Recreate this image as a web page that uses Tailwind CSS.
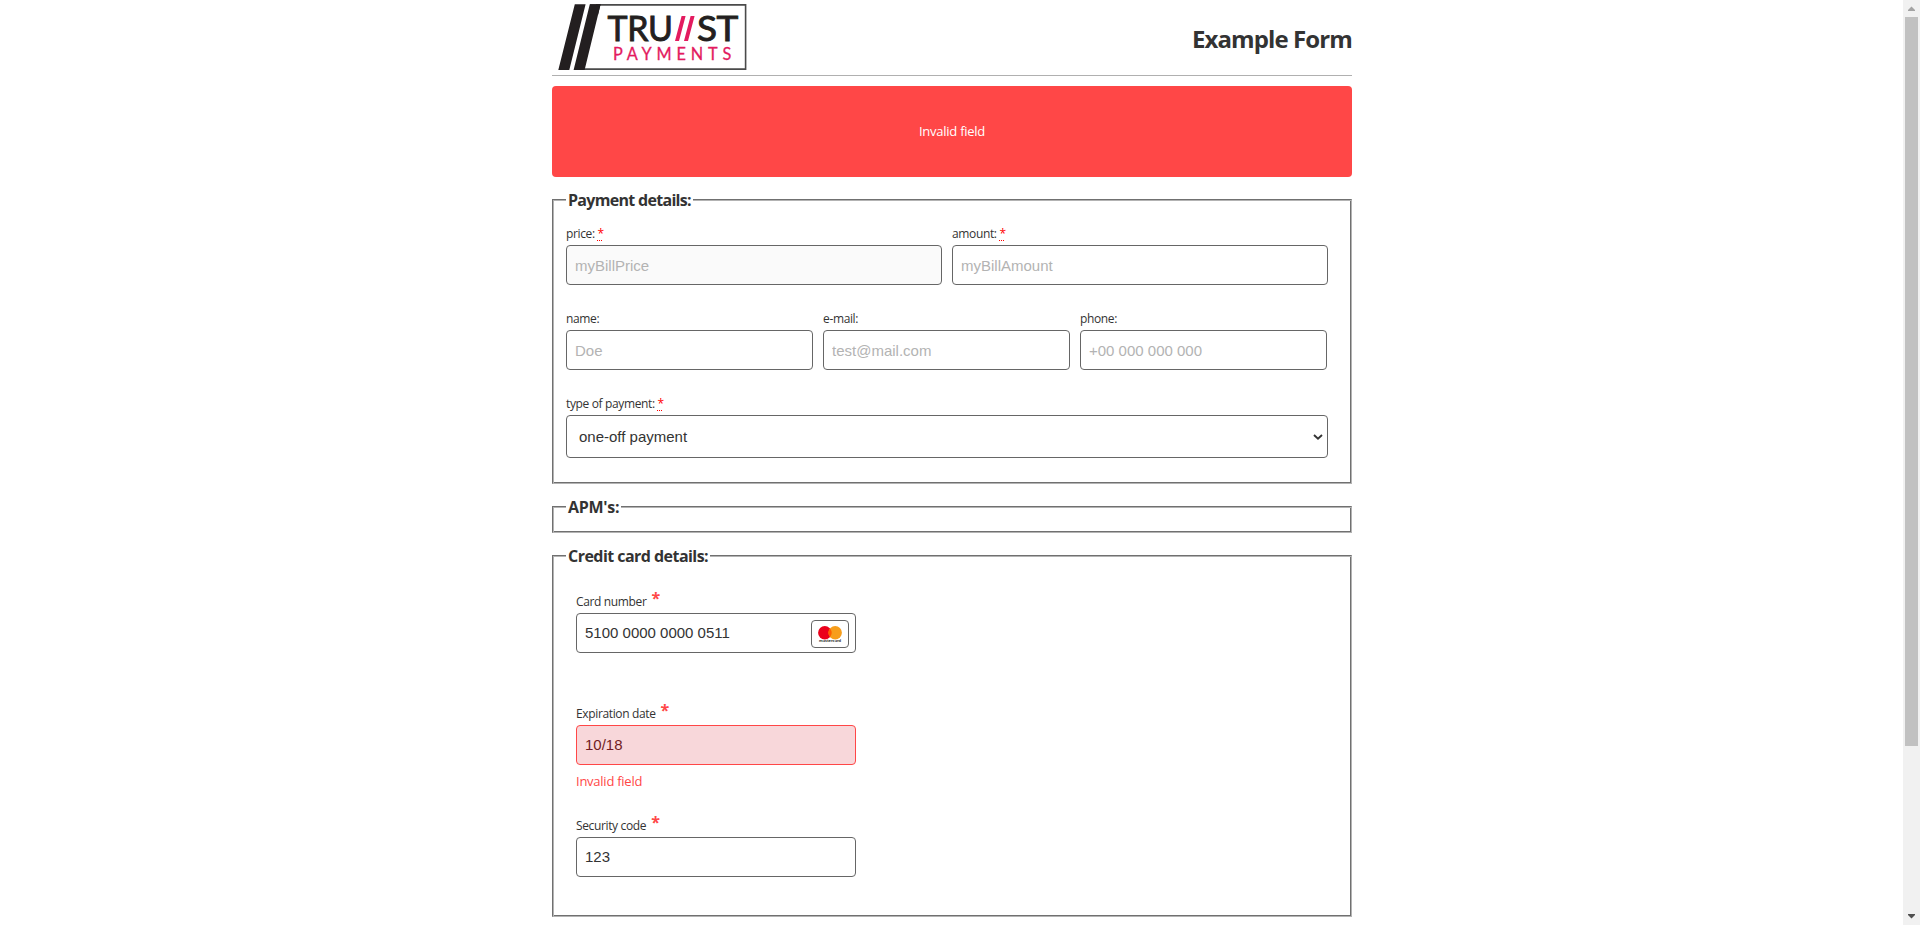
<!DOCTYPE html>
<html lang="en">
<head>
<meta charset="utf-8">
<title>Example Form</title>
<script src="https://cdn.jsdelivr.net/npm/@tailwindcss/browser@4"></script>
</head>
<body class="flex h-[925px] overflow-hidden bg-white font-['Open_Sans',sans-serif] text-[12px] leading-4 tracking-[-0.36px] text-[#333]">
<main class="flex-1">
  <div class="mx-auto box-content w-[800px] pl-px">
    <header class="flex h-[76px] w-[800px] justify-between border-b border-[#b0b0b0]">
      <svg class="ml-[5px] h-[72px] w-[192px]" viewBox="557 0 192 72">
        <path d="M596 4.9H745.6V69.1H583" fill="none" stroke="#4a4a4a" stroke-width="1.6"/>
        <path d="M574.8 4.2H585.6L569.3 70H558.3ZM589.8 4.2H600.6L584.6 70H573.6Z" fill="#231f20"/>
        <g font-family="Lato, sans-serif">
          <text x="607.5" y="40.8" font-size="34" textLength="65" lengthAdjust="spacingAndGlyphs" fill="#231f20" stroke="#231f20" stroke-width=".9">TRU</text>
          <text x="697" y="40.8" font-size="34" textLength="41" lengthAdjust="spacingAndGlyphs" fill="#231f20" stroke="#231f20" stroke-width=".9">ST</text>
          <text x="613" y="60" font-size="16.3" textLength="118" fill="#e31b5f" stroke="#e31b5f" stroke-width=".3">PAYMENTS</text>
        </g>
        <path d="M681.6 16H685.6L679 41H675ZM690.6 16H694.6L688 41H684Z" fill="#e31b5f"/>
        <path d="M590 4.2H600.6L598 15V5.7H590Z" fill="#231f20"/>
      </svg>
      <h1 class="mt-[23px] text-[24px] leading-8 font-bold tracking-[-0.9px]">Example Form</h1>
    </header>

    <div class="mt-[10px] flex h-[91px] w-[800px] items-center justify-center rounded-[4px] bg-[#ff4747] pb-[2px] text-[13px] tracking-[-0.25px] text-white">Invalid field</div>

    <section class="relative mt-[22px] h-[285px] w-[800px] border border-t-[#707070] border-r-[#b3b3b3] border-b-[#b3b3b3] border-l-[#707070] pt-[27px] pl-[13px] shadow-[inset_1px_1px_#b3b3b3,inset_-1px_-1px_#707070]">
      <h2 class="absolute top-[-11px] left-[13px] bg-white px-[2px] text-[16px] leading-[22px] font-bold tracking-[-0.7px]">Payment details:</h2>
      <div class="flex gap-[10px]">
        <div class="w-[376px]">
          <label class="block h-[18px] leading-[14px]" for="price">price: <span class="text-[#f00] underline decoration-dotted decoration-1 underline-offset-2">*</span></label>
          <input id="price" placeholder="myBillPrice" class="block h-10 w-full rounded-[4px] border border-[#666] bg-[#fafafa] px-2 font-['Liberation_Sans',sans-serif] text-[15px] tracking-normal placeholder:text-[#b3b3b3]">
        </div>
        <div class="w-[376px]">
          <label class="block h-[18px] leading-[14px]" for="amount">amount: <span class="text-[#f00] underline decoration-dotted decoration-1 underline-offset-2">*</span></label>
          <input id="amount" placeholder="myBillAmount" class="block h-10 w-full rounded-[4px] border border-[#666] px-2 font-['Liberation_Sans',sans-serif] text-[15px] tracking-normal placeholder:text-[#b3b3b3]">
        </div>
      </div>
      <div class="mt-[27px] flex gap-[10px]">
        <div class="w-[247px]">
          <label class="block h-[18px] leading-[14px]" for="name">name:</label>
          <input id="name" placeholder="Doe" class="block h-10 w-full rounded-[4px] border border-[#666] px-2 font-['Liberation_Sans',sans-serif] text-[15px] tracking-normal placeholder:text-[#b3b3b3]">
        </div>
        <div class="w-[247px]">
          <label class="block h-[18px] leading-[14px]" for="email">e-mail:</label>
          <input id="email" placeholder="test@mail.com" class="block h-10 w-full rounded-[4px] border border-[#666] px-2 font-['Liberation_Sans',sans-serif] text-[15px] tracking-normal placeholder:text-[#b3b3b3]">
        </div>
        <div class="w-[247px]">
          <label class="block h-[18px] leading-[14px]" for="phone">phone:</label>
          <input id="phone" placeholder="+00 000 000 000" class="block h-10 w-full rounded-[4px] border border-[#666] px-2 font-['Liberation_Sans',sans-serif] text-[15px] tracking-normal placeholder:text-[#b3b3b3]">
        </div>
      </div>
      <div class="mt-[27px] w-[762px]">
        <span class="block h-[18px] leading-[14px]">type of payment: <span class="text-[#f00] underline decoration-dotted decoration-1 underline-offset-2">*</span></span>
        <div class="flex h-[43px] items-center justify-between rounded-[4px] border border-[#666] pr-1 pl-3 font-['Liberation_Sans',sans-serif] text-[15px] tracking-normal">
          <span>one-off payment</span>
          <svg class="h-[6px] w-[10px]" viewBox="0 0 10 6"><path d="M1 1L5 4.7L9 1" fill="none" stroke="#333" stroke-width="1.9"/></svg>
        </div>
      </div>
    </section>

    <section class="relative mt-[22px] h-[27px] w-[800px] border border-t-[#707070] border-r-[#b3b3b3] border-b-[#b3b3b3] border-l-[#707070] shadow-[inset_1px_1px_#b3b3b3,inset_-1px_-1px_#707070]">
      <h2 class="absolute top-[-11px] left-[13px] bg-white px-[2px] text-[16px] leading-[22px] font-bold tracking-[-0.3px]">APM's:</h2>
    </section>

    <section class="relative mt-[22px] h-[362px] w-[800px] border border-t-[#707070] border-r-[#b3b3b3] border-b-[#b3b3b3] border-l-[#707070] pt-[38px] pl-[23px] shadow-[inset_1px_1px_#b3b3b3,inset_-1px_-1px_#707070]">
      <h2 class="absolute top-[-11px] left-[13px] bg-white px-[2px] text-[16px] leading-[22px] font-bold tracking-[-0.54px]">Credit card details:</h2>
      <div class="h-[112px] w-[280px]">
        <div class="flex h-[19px] gap-[5px]"><span>Card number</span><span class="-mt-[4px] text-[16px] font-bold text-[#ff4747]">*</span></div>
        <div class="flex h-10 items-center justify-between rounded-[4px] border border-[#666] pr-[6px] pl-2 font-['Liberation_Sans',sans-serif] text-[15px] tracking-normal">
          <span>5100 0000 0000 0511</span>
          <span class="mt-px flex h-[28px] w-[38px] items-center justify-center rounded-[4px] border border-[#666]">
            <svg class="h-[26px] w-[36px]" viewBox="812 621 36 26">
              <circle cx="824.8" cy="632.8" r="6.7" fill="#eb001b"/><circle cx="835.2" cy="632.8" r="6.7" fill="#f79e1b"/>
              <path d="M830 628.6a6.7 6.7 0 0 1 0 8.4a6.7 6.7 0 0 1 0-8.4Z" fill="#ff5f00"/>
              <text x="819" y="641.8" font-family="Lato, sans-serif" font-size="4" font-weight="700" textLength="22" lengthAdjust="spacingAndGlyphs" fill="#231f20">mastercard</text>
            </svg>
          </span>
        </div>
      </div>
      <div class="h-[112px] w-[280px]">
        <div class="flex h-[19px] gap-[5px]"><span>Expiration date</span><span class="-mt-[4px] text-[16px] font-bold text-[#ff4747]">*</span></div>
        <div class="flex h-10 items-center rounded-[4px] border border-[#ff4747] bg-[#f8d7da] pl-2 font-['Liberation_Sans',sans-serif] text-[15px] tracking-normal text-[#721c24]">10/18</div>
        <div class="mt-[8px] text-[13px] tracking-[-0.25px] text-[#ff4747]">Invalid field</div>
      </div>
      <div class="w-[280px]">
        <div class="flex h-[19px] gap-[5px]"><span>Security code</span><span class="-mt-[4px] text-[16px] font-bold text-[#ff4747]">*</span></div>
        <div class="flex h-10 items-center rounded-[4px] border border-[#666] pl-2 font-['Liberation_Sans',sans-serif] text-[15px] tracking-normal">123</div>
      </div>
    </section>
  </div>
</main>
<aside class="flex h-full w-[17px] flex-col items-center bg-[#f1f1f1]">
  <svg class="h-[17px] w-[17px]" viewBox="0 0 17 17"><path d="M5 11V10L8.5 6.5L12 10V11Z" fill="#a3a3a3"/></svg>
  <div class="h-[729px] w-[13px] bg-[#c1c1c1]"></div>
  <svg class="mt-auto h-[17px] w-[17px]" viewBox="0 0 17 17"><path d="M5 6V7L8.5 10.5L12 7V6Z" fill="#505050"/></svg>
</aside>
</body>
</html>
